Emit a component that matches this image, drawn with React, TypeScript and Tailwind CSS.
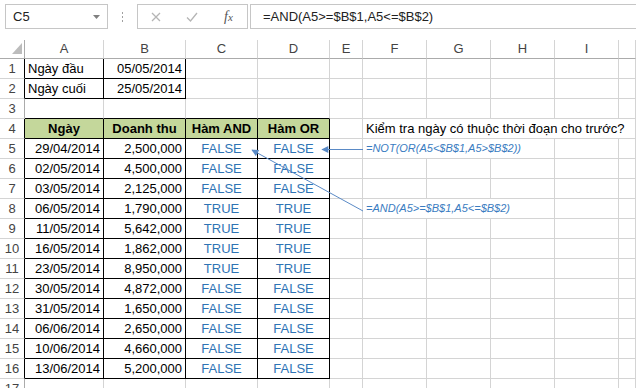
import React from 'react'

type Cell = {
  text?: string
  align?: 'left' | 'right' | 'center'
  kind?: 'head' | 'bool' | 'formula' | 'note'
  span?: number
}

const LETTERS = ['A', 'B', 'C', 'D', 'E', 'F', 'G', 'H', 'I', '']

// sales rows, A5:D16
const DATA: [string, string, string, string][] = [
  ['29/04/2014', '2,500,000', 'FALSE', 'FALSE'],
  ['02/05/2014', '4,500,000', 'FALSE', 'FALSE'],
  ['03/05/2014', '2,125,000', 'FALSE', 'FALSE'],
  ['06/05/2014', '1,790,000', 'TRUE', 'TRUE'],
  ['11/05/2014', '5,642,000', 'TRUE', 'TRUE'],
  ['16/05/2014', '1,862,000', 'TRUE', 'TRUE'],
  ['23/05/2014', '8,950,000', 'TRUE', 'TRUE'],
  ['30/05/2014', '4,872,000', 'FALSE', 'FALSE'],
  ['31/05/2014', '1,650,000', 'FALSE', 'FALSE'],
  ['06/06/2014', '2,650,000', 'FALSE', 'FALSE'],
  ['10/06/2014', '4,660,000', 'FALSE', 'FALSE'],
  ['13/06/2014', '5,200,000', 'FALSE', 'FALSE'],
]

const rowCells = (r: number): Record<number, Cell> => {
  if (r === 1) return { 0: { text: 'Ngày đầu', align: 'left' }, 1: { text: '05/05/2014', align: 'right' } }
  if (r === 2) return { 0: { text: 'Ngày cuối', align: 'left' }, 1: { text: '25/05/2014', align: 'right' } }
  if (r === 4)
    return {
      0: { text: 'Ngày', align: 'center', kind: 'head' },
      1: { text: 'Doanh thu', align: 'center', kind: 'head' },
      2: { text: 'Hàm AND', align: 'center', kind: 'head' },
      3: { text: 'Hàm OR', align: 'center', kind: 'head' },
      5: { text: 'Kiểm tra ngày có thuộc thời đoạn cho trước?', align: 'left', kind: 'note', span: 5 },
    }
  if (r >= 5 && r <= 16) {
    const d = DATA[r - 5]
    const cells: Record<number, Cell> = {
      0: { text: d[0], align: 'right' },
      1: { text: d[1], align: 'right' },
      2: { text: d[2], align: 'center', kind: 'bool' },
      3: { text: d[3], align: 'center', kind: 'bool' },
    }
    if (r === 5) cells[5] = { text: '=NOT(OR(A5<$B$1,A5>$B$2))', align: 'left', kind: 'formula', span: 3 }
    if (r === 8) cells[5] = { text: '=AND(A5>=$B$1,A5<=$B$2)', align: 'left', kind: 'formula', span: 3 }
    return cells
  }
  return {}
}

const inTable = (r: number, c: number) => (r >= 1 && r <= 2 && c <= 1) || (r >= 4 && r <= 16 && c <= 3)

function GridCell({ r, c, cell }: { r: number; c: number; cell?: Cell }) {
  const boxed = inTable(r, c)
  const br = boxed ? 'border-r-black' : 'border-r-[#d4d4d4]'
  const bb = boxed || (r === 3 && c <= 3) ? 'border-b-black' : 'border-b-[#d4d4d4]'
  const bg = r === 4 && c <= 3 ? 'bg-[#c4d79b]' : ''
  const span = cell?.span === 5 ? 'col-span-5' : cell?.span === 3 ? 'col-span-3' : ''
  const align =
    cell?.align === 'right' ? 'justify-end' : cell?.align === 'center' ? 'justify-center' : 'justify-start'
  const tone =
    cell?.kind === 'head'
      ? 'font-bold text-black'
      : cell?.kind === 'bool'
        ? 'text-[#2e74b5]'
        : cell?.kind === 'formula'
          ? 'italic text-[11px] text-[#3a7cc1]'
          : 'text-black'

  return (
    <div
      className={`flex items-center overflow-visible whitespace-nowrap border-r border-b px-[3px] ${br} ${bb} ${bg} ${span} ${align} ${tone}`}
    >
      {cell?.text}
    </div>
  )
}

function TopBar() {
  return (
    <div className="flex h-[30px] items-start pt-[4px] text-[13px] text-[#222]">
      <div className="ml-[5px] flex h-[25px] w-[103px] items-center justify-between border border-[#c6c6c6] pl-[7px] pr-[7px]">
        <span>C5</span>
        <svg width="7" height="4" viewBox="0 0 7 4">
          <path d="M0 0h7L3.5 4z" fill="#808080" />
        </svg>
      </div>
      <div className="flex h-[25px] w-[29px] flex-col items-center justify-center gap-[2px]">
        <span className="h-[2px] w-[1px] bg-[#a0a0a0]" />
        <span className="h-[2px] w-[1px] bg-[#a0a0a0]" />
        <span className="h-[2px] w-[1px] bg-[#a0a0a0]" />
      </div>
      <div className="flex h-[25px] w-[111px] items-center border border-[#c6c6c6]">
        <svg className="ml-[13px]" width="10" height="10" viewBox="0 0 10 10">
          <path d="M1 1l8 8M9 1l-8 8" stroke="#b5b5b5" strokeWidth="1.3" />
        </svg>
        <svg className="ml-[25px]" width="12" height="10" viewBox="0 0 12 10">
          <path d="M1 5.5l3.5 3.5L11 1" stroke="#b5b5b5" strokeWidth="1.3" fill="none" />
        </svg>
        <span className="ml-[26px] font-['Liberation_Serif',serif] text-[14px] italic text-[#555]">
          f<span className="text-[11px]">x</span>
        </span>
      </div>
      <div className="ml-[2px] flex h-[25px] flex-1 items-center border-y border-l border-[#c6c6c6] pl-[12px]">
        =AND(A5&gt;=$B$1,A5&lt;=$B$2)
      </div>
    </div>
  )
}

export default function App() {
  const rows = Array.from({ length: 17 }, (_, i) => i + 1)

  return (
    <div className="relative h-[388px] w-[636px] overflow-hidden bg-white font-['Liberation_Sans',Arial,sans-serif] text-[13px]">
      <TopBar />
      <div className="h-[10px]" />

      <div className="grid grid-cols-[25px_79px_82px_72px_72px_33px_64px_64px_64px_64px_17px] grid-rows-[19px_repeat(17,20px)]">
        {/* column headers */}
        <div className="relative border-r border-b border-r-[#ababab] border-b-[#ababab]">
          <svg className="absolute left-0 top-0" width="25" height="19" viewBox="0 0 25 19">
            <path d="M22 3v11H12z" fill="#bcbcbc" />
          </svg>
        </div>
        {LETTERS.map((l, i) => (
          <div
            key={i}
            className="flex items-center justify-center border-r border-b border-r-[#d4d4d4] border-b-[#ababab] text-[#444]"
          >
            {l}
          </div>
        ))}

        {rows.map(r => {
          const cells = rowCells(r)
          const rowHeadBorder = inTable(r, 0) ? 'border-r-black' : 'border-r-[#ababab]'
          const out: React.ReactNode[] = [
            <div
              key={`h${r}`}
              className={`flex items-center justify-center border-r border-b border-b-[#d4d4d4] text-[#444] ${rowHeadBorder}`}
            >
              {r}
            </div>,
          ]
          let c = 0
          while (c < 10) {
            const cell = cells[c]
            out.push(<GridCell key={`${r}-${c}`} r={r} c={c} cell={cell} />)
            c += cell?.span ?? 1
          }
          return out
        })}
      </div>

      {/* annotation arrows */}
      <svg className="pointer-events-none absolute left-0 top-0" width="636" height="388" viewBox="0 0 636 388">
        <defs>
          <marker id="tip" viewBox="0 0 10 10" refX="9" refY="5" markerWidth="9" markerHeight="7" orient="auto" markerUnits="userSpaceOnUse">
            <path d="M0 0L10 5L0 10z" fill="#5a8ac6" />
          </marker>
        </defs>
        <line x1="363" y1="149.5" x2="322" y2="149.5" stroke="#5a8ac6" strokeWidth="1" markerEnd="url(#tip)" />
        <line x1="363" y1="211" x2="252" y2="150" stroke="#5a8ac6" strokeWidth="1" markerEnd="url(#tip)" />
      </svg>
    </div>
  )
}
